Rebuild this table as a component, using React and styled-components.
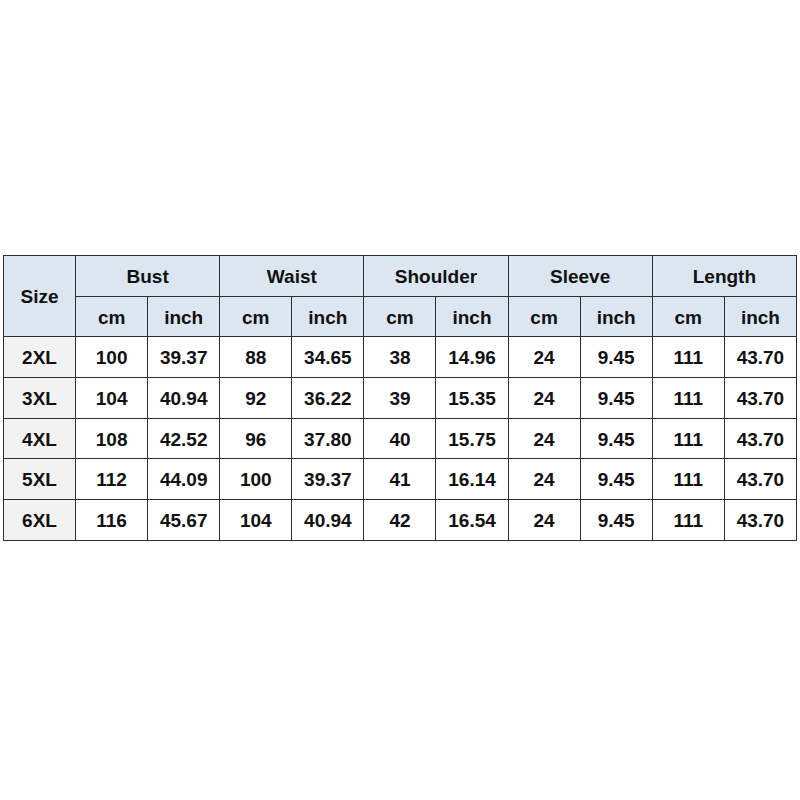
import React from "react";
import styled, { createGlobalStyle } from "styled-components";

const GlobalStyle = createGlobalStyle`
  body {
    margin: 0;
    background: #ffffff;
    font-family: "Liberation Sans", Arial, sans-serif;
  }
`;

const measures = ["Bust", "Waist", "Shoulder", "Sleeve", "Length"];

const rows = [
  ["2XL", "100", "39.37", "88", "34.65", "38", "14.96", "24", "9.45", "111", "43.70"],
  ["3XL", "104", "40.94", "92", "36.22", "39", "15.35", "24", "9.45", "111", "43.70"],
  ["4XL", "108", "42.52", "96", "37.80", "40", "15.75", "24", "9.45", "111", "43.70"],
  ["5XL", "112", "44.09", "100", "39.37", "41", "16.14", "24", "9.45", "111", "43.70"],
  ["6XL", "116", "45.67", "104", "40.94", "42", "16.54", "24", "9.45", "111", "43.70"],
];

const Page = styled.div`
  padding: 255px 0 0 3px;
`;

const Table = styled.table`
  border-collapse: collapse;
  table-layout: fixed;
  width: 794px;
  color: #111111;
  font-size: 19px;
  font-weight: 700;
`;

const Cell = styled.td`
  border: 1px solid #2b2f36;
  height: 37.7px;
  padding: 2px 0 0;
  text-align: center;
  vertical-align: middle;
  background: ${(p) => (p.$head ? "#dce6f1" : p.$size ? "#f2f2f2" : "#ffffff")};
`;

export default function App() {
  return (
    <>
      <GlobalStyle />
      <Page>
        <Table>
          <colgroup>
            {Array.from({ length: 11 }).map((_, i) => (
              <col key={i} style={{ width: "72px" }} />
            ))}
          </colgroup>
          <thead>
            <tr>
              <Cell as="th" $head rowSpan={2}>Size</Cell>
              {measures.map((m) => (
                <Cell as="th" $head colSpan={2} key={m}>{m}</Cell>
              ))}
            </tr>
            <tr>
              {measures.map((m) => (
                <React.Fragment key={m}>
                  <Cell as="th" $head>cm</Cell>
                  <Cell as="th" $head>inch</Cell>
                </React.Fragment>
              ))}
            </tr>
          </thead>
          <tbody>
            {rows.map((r) => (
              <tr key={r[0]}>
                {r.map((v, i) => (
                  <Cell key={i} $size={i === 0}>{v}</Cell>
                ))}
              </tr>
            ))}
          </tbody>
        </Table>
      </Page>
    </>
  );
}
